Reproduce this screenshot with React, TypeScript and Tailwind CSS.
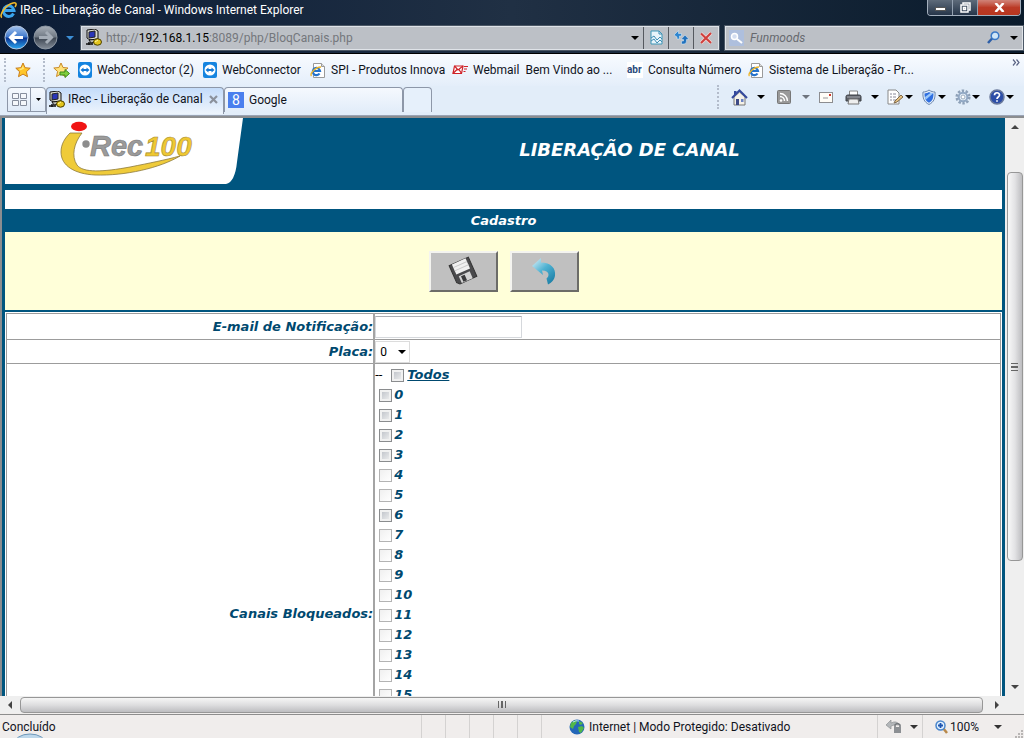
import type { ReactNode } from "react";

const channels = Array.from({ length: 16 }, (_, i) => i);
const enabledChannels = [0, 1, 2, 3, 6];

const Caret = ({ className = "text-black" }: { className?: string }) => (
  <svg width="8" height="4" viewBox="0 0 8 4" className={`shrink-0 ${className}`}>
    <path d="M0 0h8L4 4z" fill="currentColor" />
  </svg>
);

const ComputerIcon = () => (
  <svg width="17" height="17" viewBox="0 0 17 17" className="shrink-0">
    <path d="M2 1l8-1 3 2v8l-8 1-3-2z" fill="#d8d8d0" stroke="#111" />
    <path d="M4 3l6-1v6l-6 1z" fill="#2a36b8" stroke="#222" />
    <path d="M4 11l9-1 2 2-9 2z" fill="#b9b9b0" stroke="#111" />
    <path d="M1 15h7M4 13v3" stroke="#111" strokeWidth="1.5" />
    <ellipse cx="12.500" cy="13" rx="4" ry="3.200" fill="#e3c51c" stroke="#4a3f00" />
    <path d="M10 13l3-2" stroke="#fff6a0" />
  </svg>
);

const ExplorerMark = () => (
  <svg width="17" height="17" viewBox="0 0 17 17" className="shrink-0">
    <path d="M13.500 11.500A5.300 5.300 0 1 1 14 8.500H5" fill="none" stroke="#3aa5ee" strokeWidth="3" />
    <path d="M2 15.500C-1.500 14 5 3 13 1c4-1 3.500 2 2 4" fill="none" stroke="#f0b92c" strokeWidth="1.600" />
  </svg>
);

const PageIcon = () => (
  <svg width="16" height="17" viewBox="0 0 16 17" className="shrink-0">
    <path d="M3.500 1.500h8l3 3v11h-11z" fill="#fff" stroke="#9a9a9a" />
    <path d="M11.500 1.500v3h3" fill="#ddd" stroke="#9a9a9a" />
    <path d="M9.500 11.500A3.600 3.600 0 1 1 10 9H4" fill="none" stroke="#2472cc" strokeWidth="2.200" />
    <path d="M1.500 14C-.5 12 5 5 11 5" fill="none" stroke="#eeb62a" strokeWidth="1.300" />
  </svg>
);

const ConnectorIcon = () => (
  <svg width="14" height="16" viewBox="0 0 14 16" className="shrink-0">
    <rect width="14" height="16" rx="2" fill="#1484e0" />
    <circle cx="7" cy="8" r="5.500" fill="#fff" />
    <path d="M2.500 8L5.500 5.500V7h3V5.500L11.500 8l-3 2.500V9h-3v1.500z" fill="#1378d4" />
  </svg>
);

const MailIcon = () => (
  <svg width="16" height="10" viewBox="0 0 16 10" className="shrink-0">
    <path d="M2.500 1h8.500l-1.500 7.500H1z" fill="#fff" stroke="#cf2027" strokeWidth="1.200" />
    <path d="M2.500 1l3.500 4 5-4M1 8.500L5 4.500M9.500 8.500L7 4.500M12 1.500h4M12 4h3M11.500 6.500h2" fill="none" stroke="#cf2027" strokeWidth="1.200" />
  </svg>
);

const AbrIcon = () => (
  <span className="w-4 shrink-0 bg-white text-[10px] leading-4 font-bold text-[#2a4a7c]">abr</span>
);

const Star = () => (
  <svg width="16" height="16" viewBox="0 0 16 16" className="shrink-0">
    <path d="M8 1l2.100 4.700 5.100.5-3.800 3.500 1.100 5L8 12.100l-4.500 2.600 1.100-5L.8 6.200l5.100-.5z" fill="#ffc629" stroke="#c87d1a" />
    <path d="M8 3.500l1 3.200-3.500 1.500-2-1.500 3-.3z" fill="#ffe680" />
  </svg>
);

const AddStar = () => (
  <svg width="17" height="17" viewBox="0 0 17 17" className="shrink-0">
    <path d="M8 1l2 4.500 5 .5-3.800 3.500 1.100 5L8 12l-4.500 2.500 1.100-5L.8 6l5.100-.5z" fill="#ffe27a" stroke="#c88a2a" />
    <path d="M7 10h5V7.500l4.500 4-4.500 4V13H7z" fill="#7fce3c" stroke="#3c8a1d" />
  </svg>
);

const favorites: { label: string; icon: ReactNode; width: string }[] = [
  { label: "WebConnector (2)", icon: <ConnectorIcon />, width: "w-[125px]" },
  { label: "WebConnector", icon: <ConnectorIcon />, width: "w-[107px]" },
  { label: "SPI - Produtos Innova", icon: <PageIcon />, width: "w-[142px]" },
  { label: "Webmail  Bem Vindo ao ...", icon: <MailIcon />, width: "w-[175px]" },
  { label: "Consulta Número", icon: <AbrIcon />, width: "w-[121px]" },
  { label: "Sistema de Liberação - Pr...", icon: <PageIcon />, width: "w-[170px]" },
];

const Dots = () => <span className="h-6 shrink-0 border-l-2 border-dotted border-[#b3bccb]" />;

const NavButton = ({ label, forward }: { label: string; forward?: boolean }) => (
  <button aria-label={label} className="shrink-0">
    <svg width="25" height="25" viewBox="0 0 25 25">
      <defs>
        <linearGradient id={forward ? "fwd" : "back"} x2="0" y2="1">
          <stop offset="0" stopColor={forward ? "#a9b0b9" : "#a5c4ee"} />
          <stop offset=".48" stopColor={forward ? "#707984" : "#3f78cc"} />
          <stop offset=".52" stopColor={forward ? "#3d4652" : "#0a3390"} />
          <stop offset="1" stopColor={forward ? "#858e99" : "#2ba8f2"} />
        </linearGradient>
      </defs>
      <circle cx="12.500" cy="12.500" r="11.500" fill={`url(#${forward ? "fwd" : "back"})`} stroke={forward ? "#8c96a2" : "#b4c4dc"} />
      {forward ? (
        <path d="M6 12.500h12M13 7l5.500 5.500L13 18" fill="none" stroke="#a5adb7" strokeWidth="3" />
      ) : (
        <path d="M19 12.500H7M12 7l-5.500 5.500L12 18" fill="none" stroke="#fff" strokeWidth="3" />
      )}
    </svg>
  </button>
);

const TitleBar = () => (
  <header className="flex h-[22px] items-start justify-between">
    <div className="flex h-5 items-center gap-[3px] text-white">
      <ExplorerMark />
      <span>IRec - Liberação de Canal - Windows Internet Explorer</span>
    </div>
    <div className="mr-[3px] flex h-4 overflow-hidden rounded-b border border-t-0 border-[#a4b0be]">
      <button aria-label="Minimizar" className="flex w-[25px] items-end justify-center border-r border-[#93a0b0] bg-linear-to-b from-[#5e6b7a] to-[#27364a] pb-1">
        <span className="h-1 w-[11px] border border-[#555] bg-white" />
      </button>
      <button aria-label="Restaurar" className="flex w-[25px] items-center justify-center border-r border-[#93a0b0] bg-linear-to-b from-[#5e6b7a] to-[#27364a]">
        <svg width="11" height="11" viewBox="0 0 11 11" fill="none" stroke="#fff" strokeWidth="1.500">
          <path d="M3 2.500V1h7v7H8.500" />
          <path d="M1 3h7v7H1zM3.500 5.500h2v2h-2z" />
        </svg>
      </button>
      <button aria-label="Fechar" className="flex w-[42px] items-center justify-center bg-linear-to-b from-[#d08378] via-[#bb3a26] to-[#b8361f]">
        <svg width="11" height="9" viewBox="0 0 11 9">
          <path d="M1.500 0l8 9M9.500 0l-8 9" stroke="#fff" strokeWidth="2.500" />
        </svg>
      </button>
    </div>
  </header>
);

const AddressRow = () => (
  <div className="flex h-[31px] items-center px-1 pr-px">
    <NavButton label="Voltar" />
    <span className="w-1" />
    <NavButton label="Avançar" forward />
    <button aria-label="Páginas recentes" className="flex w-[23px] justify-center">
      <Caret className="text-[#3c8fd6]" />
    </button>
    <div className="flex h-6 min-w-0 flex-1 items-stretch border border-[#dfe3e8] bg-[#bcc0c6] outline outline-[#4c5866]">
      <div className="flex min-w-0 flex-1 items-center gap-1 px-[3px]">
        <ComputerIcon />
        <div
          role="textbox"
          aria-label="Endereço"
          contentEditable
          suppressContentEditableWarning
          spellCheck={false}
          className="min-w-0 flex-1 whitespace-nowrap text-[#74777c] outline-none"
        >
          http://<span className="text-black">192.168.1.15</span>:8089/php/BloqCanais.php
        </div>
        <Caret />
      </div>
      <button aria-label="Modo de compatibilidade" className="ml-px flex w-[25px] items-center justify-center border-l border-[#55595f]">
        <svg width="13" height="15" viewBox="0 0 13 15">
          <path d="M1 1h8l3 3v10H1z" fill="#e8f4fa" stroke="#3e98b8" />
          <path d="M9 1v3h3M1 8l3-2 3 4 3-3 2 2M1 11l3-2 3 4 3-3 2 2" fill="none" stroke="#3e8db4" />
        </svg>
      </button>
      <button aria-label="Atualizar" className="flex w-[25px] items-center justify-center border-l border-[#55595f]">
        <svg width="15" height="15" viewBox="0 0 15 15">
          <path d="M0 5l4.500-4.500V3.500H7.500V6H5.500v3H3V7z" fill="#2f86d0" stroke="#e3f0fa" strokeWidth=".5" />
          <path d="M15 9.500L11 5 7 9.500h2.500V11H7.500v3H10q2.500 0 2.500-3V9.500z" fill="#2171bd" stroke="#e3f0fa" strokeWidth=".5" />
        </svg>
      </button>
      <button aria-label="Parar" className="flex w-[25px] items-center justify-center border-l border-[#55595f]">
        <svg width="12" height="12" viewBox="0 0 12 12">
          <path d="M1 1.500l10 9.500M11 1L1 11" stroke="#f0d6d5" strokeWidth="3.500" />
          <path d="M1 1.500l10 9.500M11 1L1 11" stroke="#cf3f3c" strokeWidth="2" />
        </svg>
      </button>
    </div>
    <div className="ml-[6px] flex h-6 w-[298px] items-center gap-[6px] border border-[#dfe3e8] bg-[#bcc0c6] pr-1 pl-[3px] outline outline-[#4c5866]">
      <svg width="15" height="16" viewBox="0 0 15 16" className="shrink-0">
        <rect width="15" height="16" fill="#aebfdd" />
        <circle cx="5.500" cy="6.500" r="3" fill="#d4def0" stroke="#fff" strokeWidth="1.500" />
        <path d="M8 9l5 4" stroke="#fff" strokeWidth="2" />
      </svg>
      <input aria-label="Pesquisar" placeholder="Funmoods" className="min-w-0 flex-1 bg-transparent italic outline-none placeholder:text-[#66696e]" />
      <button aria-label="Buscar">
        <svg width="13" height="13" viewBox="0 0 13 13">
          <path d="M1 12l4.500-5" stroke="#2e5fa8" strokeWidth="2.500" />
          <circle cx="8" cy="4.800" r="3.800" fill="#cfe6f8" stroke="#3978c6" strokeWidth="1.500" />
        </svg>
      </button>
      <button aria-label="Opções de pesquisa" className="flex w-3 justify-end">
        <Caret />
      </button>
    </div>
  </div>
);

const FavoritesBar = () => (
  <nav className="flex h-8 items-center bg-linear-to-b from-[#f8fbff] to-[#e4eefa] pl-1">
    <Dots />
    <button aria-label="Favoritos" className="mr-3 ml-[9px]">
      <Star />
    </button>
    <Dots />
    <button aria-label="Adicionar a favoritos" className="mr-2 ml-2">
      <AddStar />
    </button>
    {favorites.map((item) => (
      <a key={item.label} href="#" className={`flex items-center gap-[5px] whitespace-pre text-[#10131c] ${item.width}`}>
        {item.icon}
        <span>{item.label}</span>
      </a>
    ))}
    <button aria-label="Mais favoritos" className="mr-1 mb-4 ml-auto text-[#5b6485]">
      <svg width="8" height="7" viewBox="0 0 8 7" fill="none" stroke="currentColor" strokeWidth="1.200">
        <path d="M1 .5l2.500 3L1 6.500M4.500 .5l2.500 3-2.500 3" />
      </svg>
    </button>
  </nav>
);

const TabBar = () => (
  <div className="flex h-[30px] items-start justify-between border-b border-[#9aa4b5] bg-[#e2edf9] text-[#10131c]">
    <div className="flex items-start pt-px pl-[7px]">
      <div className="flex h-[25px] rounded-t border border-[#8d97a8] bg-linear-to-b from-[#f5f9fe] to-[#e0ebf8]">
        <button aria-label="Guias rápidas" className="flex w-[23px] items-center justify-center border-r border-[#8d97a8]">
          <svg width="15" height="13" viewBox="0 0 15 13" fill="#f4f7fb" stroke="#858d9c">
            <path d="M.5.5h6v5h-6zM8.500.5h6v5h-6zM.5 7.500h6v5h-6zM8.500 7.500h6v5h-6z" />
          </svg>
        </button>
        <button aria-label="Lista de guias" className="flex w-[14px] items-center justify-center">
          <svg width="5" height="3" viewBox="0 0 5 3">
            <path d="M0 0h5L2.500 3z" />
          </svg>
        </button>
      </div>
      <div className="flex h-[27px] w-[178px] items-center rounded-t border border-b-0 border-[#8d97a8] bg-linear-to-b from-[#c4dcfa] to-[#eef5fd] pb-1 pl-px">
        <button className="flex flex-1 items-center gap-[3px] whitespace-nowrap">
          <ComputerIcon />
          IRec - Liberação de Canal
        </button>
        <button aria-label="Fechar guia" className="mr-[5px]">
          <svg width="9" height="9" viewBox="0 0 9 9">
            <path d="M1 1l7 7M8 1L1 8" stroke="#8b919c" strokeWidth="2.200" />
          </svg>
        </button>
      </div>
      <button className="flex h-[25px] w-[179px] items-center gap-[5px] rounded-t border border-b-0 border-[#8d97a8] bg-linear-to-b from-[#f5f9fe] to-[#e2edf9] pl-[3px]">
        <span className="h-4 w-4 bg-[#4a7fee] text-center text-sm leading-4 text-white">8</span>
        Google
      </button>
      <button aria-label="Nova guia" className="h-[25px] w-[29px] rounded-t border border-b-0 border-[#8d97a8] bg-[#e6f0fb]" />
    </div>
    <div className="flex h-[22px] items-center pr-[10px]">
      <Dots />
      <button aria-label="Página inicial" className="ml-3 flex items-center gap-[9px]">
        <svg width="17" height="17" viewBox="0 0 17 17">
          <path d="M3 8l5.500-5L14 8v8H3z" fill="#f4f1e8" stroke="#777" />
          <path d="M1 9l7.500-7.500L16 9" fill="none" stroke="#34499c" strokeWidth="2" />
          <path d="M3 2h2.500v3L3 7z" fill="#34499c" />
          <path d="M5 10h3v6H5z" fill="#3d4a86" />
          <path d="M10 10h2.500v3H10z" fill="#6c83c4" />
        </svg>
        <Caret />
      </button>
      <button aria-label="Feeds" className="ml-3 flex items-center gap-[11px]">
        <svg width="14" height="14" viewBox="0 0 14 14">
          <rect x=".5" y=".5" width="13" height="13" rx="1" fill="#999" stroke="#777" />
          <circle cx="4" cy="10.500" r="1.300" fill="#fff" />
          <path d="M3 6.500a4.500 4.500 0 0 1 4.500 4.500M3 3.500a7.500 7.500 0 0 1 7.500 7.500" fill="none" stroke="#fff" strokeWidth="1.400" />
        </svg>
        <Caret className="text-[#6e747e]" />
      </button>
      <button aria-label="Ler email" className="ml-[9px]">
        <svg width="14" height="11" viewBox="0 0 14 11">
          <rect x=".5" y=".5" width="13" height="10" fill="#fffdf8" stroke="#8d8d90" />
          <path d="M10 2h2v2h-2z" fill="#d0382c" />
          <path d="M4 6h5" stroke="#999" />
        </svg>
      </button>
      <button aria-label="Imprimir" className="ml-3 flex items-center gap-[9px]">
        <svg width="17" height="15" viewBox="0 0 17 15">
          <path d="M4.500 1h8v5h-8z" fill="#fff" stroke="#888" />
          <path d="M1 6.500Q1 5 3 5h11q2 0 2 1.500V11H1z" fill="#5c5f66" stroke="#3f4248" />
          <path d="M4 9h9l1 5H3z" fill="#eee" stroke="#777" />
          <path d="M2 7h13" stroke="#a9acb2" />
        </svg>
        <Caret />
      </button>
      <button aria-label="Página" className="ml-2 flex items-center gap-[2px]">
        <svg width="16" height="16" viewBox="0 0 16 16">
          <path d="M1 1h8l3 3v11H1z" fill="#fff" stroke="#888" />
          <path d="M3 5h2M3 8h2M3 11h2M6 5h3M6 8h3M6 11h3" stroke="#889" />
          <path d="M8 12l6-6 2 2-6 5-3 1z" fill="#e6c282" stroke="#80694a" />
        </svg>
        <Caret />
      </button>
      <button aria-label="Segurança" className="ml-[9px] flex items-center gap-[2px]">
        <svg width="14" height="16" viewBox="0 0 14 16">
          <path d="M7 1c2 1.500 4 2 6 2 .5 6-1 10-6 12.500C2 13 .5 9 1 3c2 0 4-.5 6-2z" fill="#e5eef8" stroke="#6b86ad" />
          <path d="M7 3c1.500 1 3 1.300 4.500 1.500C11.500 9 10.500 12 7 13.800 3.500 12 2.500 9 2.500 4.500 4 4.300 5.500 4 7 3z" fill="#2f6fe0" />
          <path d="M3 8l6-4.500 2 1L3.500 11z" fill="#9cc8fa" />
        </svg>
        <Caret />
      </button>
      <button aria-label="Ferramentas" className="ml-[9px] flex items-center gap-[1px]">
        <svg width="16" height="16" viewBox="0 0 16 16">
          <circle cx="8" cy="8" r="6.300" fill="none" stroke="#8ea1b8" strokeWidth="2.500" strokeDasharray="2.400 1.550" />
          <circle cx="8" cy="8" r="4.300" fill="#e8f0f8" stroke="#91a8c4" strokeWidth="2" />
          <circle cx="8" cy="8" r="2" fill="#fff" stroke="#9aabbf" />
        </svg>
        <Caret />
      </button>
      <button aria-label="Ajuda" className="ml-[9px] flex items-center gap-[1px]">
        <svg width="16" height="16" viewBox="0 0 16 16">
          <circle cx="8" cy="8" r="7" fill="#2c4ea8" stroke="#6b7a9c" strokeWidth="1.500" />
          <path d="M5.500 6.200C5.500 3 10.500 3 10.500 6c0 2-2.500 2-2.500 4M8 11.200v1.600" fill="none" stroke="#fff" strokeWidth="1.700" />
        </svg>
        <Caret />
      </button>
    </div>
  </div>
);

const Logo = () => (
  <svg viewBox="0 0 240 66" className="h-[66px] w-60 shrink-0" role="img" aria-label="i-Rec100">
    <path d="M0 0h238l-6 44q-2 20-11 22H0z" fill="#fff" />
    <path
      d="M65 15H77C69 25 66 38 72 47c6 8 26 7 53 2 20-4 35-7 50-11-20 12-55 20-85 19C70 56 56 48 56 34c0-8 4-14 9-19z"
      fill="#efcb3a"
      stroke="#8d7a3c"
      strokeWidth=".8"
    />
    <ellipse cx="74" cy="8.500" rx="8" ry="4.700" fill="#f01414" />
    <circle cx="81" cy="26" r="3.700" fill="#8d8d8d" />
    <g fontFamily="Liberation Sans, sans-serif" fontWeight="bold" fontStyle="italic">
      <text x="85" y="38" fontSize="29" fill="#9b9b9b" stroke="#777" strokeWidth=".6">Rec</text>
      <text x="140" y="38" fontSize="28" fill="#efc832" stroke="#a38a3c" strokeWidth=".6">100</text>
    </g>
  </svg>
);

const ToolButton = ({ label, children }: { label: string; children: ReactNode }) => (
  <button
    type="button"
    aria-label={label}
    className="flex h-[41px] w-[69px] items-center justify-center border-2 border-t-[#f4f4f0] border-r-[#6c6c68] border-b-[#6c6c68] border-l-[#f4f4f0] bg-[#c0c0c0]"
  >
    {children}
  </button>
);

const Check = ({ id, disabled }: { id: string; disabled?: boolean }) => (
  <input
    id={id}
    type="checkbox"
    disabled={disabled}
    className="h-[13px] w-[13px] shrink-0 appearance-none border border-[#8a8c8e] bg-linear-to-br from-[#b9bdc4] to-[#f4f4f4] shadow-[inset_0_0_0_2px_#f1f1f1] disabled:border-[#b3b3b3] disabled:from-[#f0f0f0] disabled:to-white disabled:shadow-none"
  />
);

const ChannelForm = () => (
  <form className="bg-white">
    <h2 className="h-[23px] bg-[#00557f] text-center leading-6 text-white">Cadastro</h2>
    <div className="flex h-[78px] items-center justify-center gap-3 bg-[#ffffd9]">
      <ToolButton label="Salvar">
        <svg width="30" height="30" viewBox="0 0 30 30">
          <g transform="rotate(-24 15 15)">
            <path d="M4.500 4.500h21v21H7l-2.500-2.500z" fill="#4a4a4c" stroke="#333" />
            <path d="M7.500 4.500h15v11h-15z" fill="#f0f0f0" />
            <path d="M7.500 8h15M7.500 11.500h15" stroke="#c9c9c9" />
            <path d="M9 18h12v7.500H9z" fill="#d4d4d4" />
            <path d="M11 19h4v6h-4z" fill="#39393b" />
          </g>
        </svg>
      </ToolButton>
      <ToolButton label="Voltar">
        <svg width="26" height="28" viewBox="0 0 26 28">
          <defs>
            <linearGradient id="undo" x1="0" x2=".8" y1="0" y2="1">
              <stop offset="0" stopColor="#e4f4fa" />
              <stop offset=".5" stopColor="#4fb2d2" />
              <stop offset="1" stopColor="#1c7fa6" />
            </linearGradient>
          </defs>
          <path d="M1 9L10 1v4.500c10 0 15 6 14 13-.5 4-3.500 7.500-7 9l-1.500-6c3-2 3.500-8-4.500-8l1 4.500z" fill="url(#undo)" />
        </svg>
      </ToolButton>
    </div>
    <div className="border-t-2 border-[#00557f] px-px pt-px">
      <table className="w-full border-collapse border border-[#9c9c9c]">
        <tbody>
          <tr className="h-[26px] border-b border-[#9c9c9c]">
            <th scope="row" className="w-[37%] border-r-2 border-[#a4a4a4] p-0 text-right">
              <label htmlFor="email">E-mail de Notificação:</label>
            </th>
            <td className="p-0">
              <input id="email" type="email" className="block h-[22px] w-[147px] border border-[#d5d8dc] border-t-[#abadb3] px-1 text-black not-italic outline-none" />
            </td>
          </tr>
          <tr className="h-6 border-b border-[#9c9c9c]">
            <th scope="row" className="border-r-2 border-[#a4a4a4] p-0 text-right">
              <label htmlFor="placa">Placa:</label>
            </th>
            <td className="p-0">
              <div className="relative w-[35px]">
                <select id="placa" className="block h-[22px] w-full appearance-none border border-[#dcdcdc] bg-white pl-1 font-[Roboto,sans-serif] text-xs font-normal text-black not-italic outline-none">
                  <option>0</option>
                  <option>1</option>
                </select>
                <span className="pointer-events-none absolute inset-y-0 right-1 flex items-center">
                  <Caret />
                </span>
              </div>
            </td>
          </tr>
          <tr className="h-[501px]">
            <th scope="row" className="border-r-2 border-[#a4a4a4] p-0 text-right">Canais Bloqueados:</th>
            <td className="p-0 pt-px align-top">
              <div className="flex h-5 items-center">
                <span className="w-4 font-[Roboto,sans-serif] font-normal text-black not-italic">--</span>
                <Check id="todos" />
                <label htmlFor="todos" className="pl-[3px] underline">Todos</label>
              </div>
              {channels.map((n) => (
                <div key={n} className="flex h-5 items-center pl-1">
                  <Check id={`canal-${n}`} disabled={!enabledChannels.includes(n)} />
                  <label htmlFor={`canal-${n}`} className="pl-[2px]">{n}</label>
                </div>
              ))}
            </td>
          </tr>
        </tbody>
      </table>
    </div>
  </form>
);

const VerticalScroll = () => (
  <div className="flex w-[19px] flex-col items-center bg-[#efefef] px-px">
    <button aria-label="Rolar para cima" className="flex h-[18px] items-center">
      <Caret className="rotate-180 text-[#444]" />
    </button>
    <div className="grow-[36] basis-0" />
    <div className="flex w-4 grow-[389] basis-0 items-center justify-center rounded-sm border border-[#979797] bg-linear-to-r from-[#f8f8f8] via-[#e2e2e4] to-[#bdbdc0]">
      <span className="flex h-2 w-[7px] flex-col justify-center border-y border-[#666]">
        <span className="h-[2px] bg-[#666]" />
      </span>
    </div>
    <div className="grow-[117] basis-0" />
    <button aria-label="Rolar para baixo" className="flex h-[18px] items-center">
      <Caret className="text-[#444]" />
    </button>
  </div>
);

const HorizontalScroll = () => (
  <div className="flex h-[17px] shrink-0 items-center bg-[#efefef]">
    <button aria-label="Rolar para a esquerda" className="flex w-5 justify-center">
      <Caret className="rotate-90 text-[#444]" />
    </button>
    <div className="flex h-4 flex-1 items-center justify-center rounded-sm border border-[#979797] bg-linear-to-b from-[#f6f6f6] via-[#dededf] to-[#bdbdc0]">
      <span className="flex h-[7px] w-2 justify-center border-x border-[#666]">
        <span className="w-[2px] bg-[#666]" />
      </span>
    </div>
    <button aria-label="Rolar para a direita" className="mr-[14px] flex w-[27px] justify-center">
      <Caret className="-rotate-90 text-[#444]" />
    </button>
  </div>
);

const StatusBar = () => (
  <footer className="relative flex h-6 shrink-0 items-center overflow-hidden border-t border-[#8d8d8d] bg-[#f0edec] text-[#10131c]">
    <span className="flex-1 pl-[2px]">Concluído</span>
    <span className="flex self-stretch">
      {[0, 1, 2, 3, 4, 5].map((n) => (
        <span key={n} className="w-6 border-l border-[#d4d2d1]" />
      ))}
    </span>
    <div className="flex w-[312px] items-center gap-1 self-stretch pl-1">
      <svg width="16" height="16" viewBox="0 0 16 16">
        <circle cx="8" cy="8" r="7.500" fill="#2467b8" />
        <path d="M2 4q4-4 6-2l-1 3-2 2-1 3-3-2zM9 8l4-1 2 2-3 5-2-1zM10 2l4 2-2 2-2-1z" fill="#52b848" />
        <path d="M4 3q3-2 6-1" stroke="#b5e2f8" fill="none" />
      </svg>
      <span>Internet | Modo Protegido: Desativado</span>
    </div>
    <button aria-label="Filtragem" className="flex w-[45px] items-center gap-2 self-stretch border-l border-[#d4d2d1] pl-2">
      <svg width="16" height="15" viewBox="0 0 16 15">
        <path d="M0 6l5-5v3q6-3 8 2-4-1-8 1v3z" fill="#b3b6b9" stroke="#8e9194" strokeWidth=".7" />
        <path d="M9 8V6q2.500-3 5 0v2" fill="none" stroke="#73777b" strokeWidth="1.500" />
        <rect x="8" y="8" width="7" height="6" fill="#8c8f93" />
      </svg>
      <Caret className="text-[#333]" />
    </button>
    <button className="flex w-[102px] items-center gap-[2px] self-stretch border-l border-[#d4d2d1] pl-3">
      <svg width="13" height="14" viewBox="0 0 13 14">
        <path d="M8 8l4 5" stroke="#b8884a" strokeWidth="2.500" />
        <circle cx="5.500" cy="5.500" r="4.500" fill="#e2f1ff" stroke="#4a86cc" strokeWidth="1.500" />
        <path d="M3 5.500h5M5.500 3v5" stroke="#1e55b0" strokeWidth="1.800" />
      </svg>
      <span className="flex-1 text-left">100%</span>
      <Caret className="mr-[22px] text-[#333]" />
    </button>
    {/* edge of the start orb */}
    <svg width="28" height="5" viewBox="0 0 28 5" className="absolute bottom-0 left-4">
      <ellipse cx="14" cy="11" rx="16" ry="10" fill="#bdd7ea" stroke="#6d98ba" />
    </svg>
    <svg width="8" height="8" viewBox="0 0 8 8" className="absolute right-px bottom-0" fill="#b8b5b4">
      <path d="M6 0h2v2H6zM3 3h2v2H3zM6 3h2v2H6zM0 6h2v2H0zM3 6h2v2H3zM6 6h2v2H6z" />
    </svg>
  </footer>
);

export default function App() {
  return (
    <div className="flex h-screen flex-col overflow-hidden bg-[#f0edec] font-[Roboto,sans-serif] text-xs leading-4">
      <div className="shrink-0 border-b border-black bg-linear-to-r from-[#0b1c36] via-[#203044] to-[#0a1b2c]">
        <TitleBar />
        <AddressRow />
      </div>
      <div className="shrink-0">
        <FavoritesBar />
        <TabBar />
      </div>
      <div className="flex min-h-0 flex-1 border-t-2 border-l-2 border-[#8b8d90]">
        <main className="min-w-0 flex-1 overflow-hidden border-x-[3px] border-[#00557f] bg-white font-['DejaVu_Sans',Verdana,sans-serif] text-[13px] font-bold text-[#00496f] italic">
          <div className="flex h-[72px] items-start bg-[#00557f]">
            <Logo />
            <h1 className="flex-1 pt-5 pl-3 text-center text-lg leading-6 text-white">LIBERAÇÃO DE CANAL</h1>
          </div>
          <div className="h-[19px]" />
          <ChannelForm />
        </main>
        <VerticalScroll />
      </div>
      <HorizontalScroll />
      <div className="h-px shrink-0" />
      <StatusBar />
    </div>
  );
}
